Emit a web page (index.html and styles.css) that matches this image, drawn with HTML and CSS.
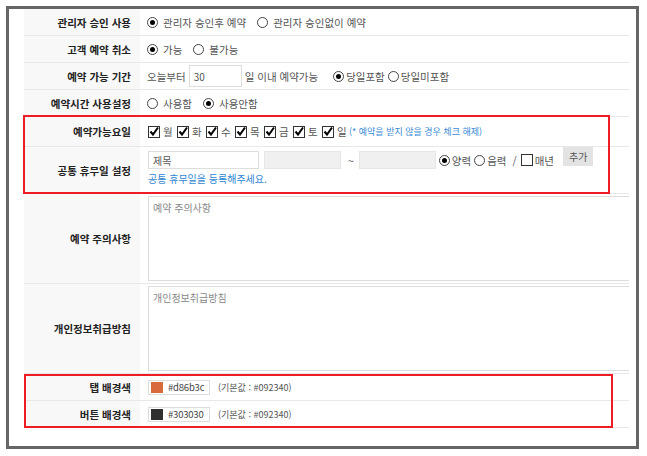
FILE: index.html
```html
<!DOCTYPE html>
<html lang="ko">

<head>
  <meta charset="UTF-8" />
  <title>예약 설정</title>
  <link rel="stylesheet" href="styles.css">
</head>

<body>
  <div class="frame">
    <div class="sheet">
      <div class="row">
        <div class="label">관리자 승인 사용</div>
        <div class="value">
          <span class="opt"><span class="radio on"></span>관리자 승인후 예약</span>
          <span class="opt"><span class="radio"></span>관리자 승인없이 예약</span>
        </div>
      </div>

      <div class="row">
        <div class="label">고객 예약 취소</div>
        <div class="value">
          <span class="opt"><span class="radio on"></span>가능</span>
          <span class="opt"><span class="radio"></span>불가능</span>
        </div>
      </div>

      <div class="row">
        <div class="label">예약 가능 기간</div>
        <div class="value">
          오늘부터
          <input class="field field-days" type="text" value="30">
          일 이내 예약가능
          <span class="opt opt-tight opt-first"><span class="radio on"></span>당일포함</span>
          <span class="opt opt-tight"><span class="radio"></span>당일미포함</span>
        </div>
      </div>

      <div class="row">
        <div class="label">예약시간 사용설정</div>
        <div class="value">
          <span class="opt"><span class="radio"></span>사용함</span>
          <span class="opt"><span class="radio on"></span>사용안함</span>
        </div>
      </div>

      <div class="row row-days">
        <div class="label">예약가능요일</div>
        <div class="value">
          <span class="day"><svg class="chk" viewBox="0 0 12 12"><rect x="0.5" y="0.5" width="11" height="11" /><path d="M2.5 5.5 L5 8.5 L10 1.5" /></svg>월</span>
          <span class="day"><svg class="chk" viewBox="0 0 12 12"><rect x="0.5" y="0.5" width="11" height="11" /><path d="M2.5 5.5 L5 8.5 L10 1.5" /></svg>화</span>
          <span class="day"><svg class="chk" viewBox="0 0 12 12"><rect x="0.5" y="0.5" width="11" height="11" /><path d="M2.5 5.5 L5 8.5 L10 1.5" /></svg>수</span>
          <span class="day"><svg class="chk" viewBox="0 0 12 12"><rect x="0.5" y="0.5" width="11" height="11" /><path d="M2.5 5.5 L5 8.5 L10 1.5" /></svg>목</span>
          <span class="day"><svg class="chk" viewBox="0 0 12 12"><rect x="0.5" y="0.5" width="11" height="11" /><path d="M2.5 5.5 L5 8.5 L10 1.5" /></svg>금</span>
          <span class="day"><svg class="chk" viewBox="0 0 12 12"><rect x="0.5" y="0.5" width="11" height="11" /><path d="M2.5 5.5 L5 8.5 L10 1.5" /></svg>토</span>
          <span class="day"><svg class="chk" viewBox="0 0 12 12"><rect x="0.5" y="0.5" width="11" height="11" /><path d="M2.5 5.5 L5 8.5 L10 1.5" /></svg>일</span>
          <span class="note">(* 예약을 받지 않을 경우 체크 해제)</span>
        </div>
      </div>

      <div class="row row-holiday">
        <div class="label">공통 휴무일 설정</div>
        <div class="value value-stack">
          <div class="holiday-line">
            <input class="field field-title" type="text" value="제목">
            <input class="field field-date" type="text" disabled>
            <span class="tilde">~</span>
            <input class="field field-date field-end" type="text" disabled>
            <span class="opt opt-tight opt-solar"><span class="radio on"></span>양력</span>
            <span class="opt opt-tight"><span class="radio"></span>음력</span>
            <span class="slash">/</span>
            <span class="opt opt-tight"><svg class="chk" viewBox="0 0 12 12"><rect x="0.5" y="0.5" width="11" height="11" /></svg>매년</span>
            <button class="btn" type="button">추가</button>
          </div>
          <a class="link" href="#">공통 휴무일을 등록해주세요.</a>
        </div>
      </div>

      <div class="row row-text">
        <div class="label">예약 주의사항</div>
        <div class="value value-text">
          <textarea class="memo" placeholder="예약 주의사항"></textarea>
        </div>
      </div>

      <div class="row row-text">
        <div class="label">개인정보취급방침</div>
        <div class="value value-text">
          <textarea class="memo" placeholder="개인정보취급방침"></textarea>
        </div>
      </div>

      <div class="row">
        <div class="label">탭 배경색</div>
        <div class="value">
          <span class="color-field"><span class="swatch" style="background: #d86b3c;"></span>#d86b3c</span>
          <span class="hint">(기본값 : #092340)</span>
        </div>
      </div>

      <div class="row">
        <div class="label">버튼 배경색</div>
        <div class="value">
          <span class="color-field"><span class="swatch" style="background: #303030;"></span>#303030</span>
          <span class="hint">(기본값 : #092340)</span>
        </div>
      </div>
    </div>

    <!-- red marks drawn over the form -->
    <div class="mark mark-days"></div>
    <div class="mark mark-colors"></div>
  </div>
</body>

</html>
```

FILE: styles.css
```css
* {
  box-sizing: border-box;
}

body {
  margin: 0;
  padding: 6px;
  background: #fff;
  font-family: "Noto Sans CJK KR", "Noto Sans", sans-serif;
  font-size: 10px;
  color: #555;
}

.frame {
  position: relative;
  width: 633px;
  height: 443px;
  border: 3px solid #666;
  background: #fff;
}

.sheet {
  margin: 0 7px 0 15px;
  overflow: hidden;
}

.row {
  display: flex;
  height: 27px;
  border-bottom: 1px solid #e8e8e8;
}

.row-days {
  height: 30px;
}

.row-holiday {
  height: 47px;
}

.row-text {
  height: 90px;
}

.label {
  flex: none;
  width: 116px;
  display: flex;
  align-items: center;
  justify-content: flex-end;
  padding-right: 9px;
  background: #f8f8f8;
  font-size: 10.5px;
  font-weight: bold;
  color: #222;
}

.value {
  flex: 1;
  min-width: 0;
  display: flex;
  align-items: center;
  padding-left: 7px;
  font-size: 10.5px;
  white-space: nowrap;
}

/* radio buttons */
.opt {
  display: inline-flex;
  align-items: center;
  gap: 5px;
  margin-right: 11px;
}

.opt-tight {
  gap: 2px;
  margin-right: 3px;
}

.opt-first {
  margin-left: 15px;
}

.opt-solar {
  margin-left: 3px;
}

.radio {
  flex: none;
  width: 11px;
  height: 11px;
  border: 1px solid #444;
  border-radius: 50%;
  background: #fff;
  display: inline-flex;
  align-items: center;
  justify-content: center;
}

.radio.on::after {
  content: "";
  width: 5px;
  height: 5px;
  border-radius: 50%;
  background: #000;
}

/* checkboxes */
.chk {
  flex: none;
  width: 12px;
  height: 12px;
}

.chk rect {
  fill: #fff;
  stroke: #333;
  stroke-width: 1;
}

.chk path {
  fill: none;
  stroke: #000;
  stroke-width: 2;
}

.day {
  display: inline-flex;
  align-items: center;
  gap: 3px;
  width: 29px;
  padding-left: 1px;
}

.note {
  margin-left: -1px;
  font-size: 9px;
  color: #3a8ad6;
}

/* text fields */
.field {
  height: 18px;
  border: 1px solid #ddd;
  background: #fff;
  font-family: inherit;
  font-size: 10px;
  color: #555;
  padding: 0 4px;
  outline: none;
}

.field-days {
  width: 53px;
  height: 22px;
  margin: 0 3px;
}

.field-title {
  width: 111px;
  margin-left: 1px;
}

.field-date {
  width: 77px;
  margin-left: 5px;
  background: #f0f0f0;
  border-color: #e6e6e6;
}

.field-end {
  margin-left: 0;
}

.tilde {
  margin: 0 5px 0 7px;
}

.slash {
  margin: 0 4px 0 3px;
}

.value-stack {
  flex-direction: column;
  align-items: flex-start;
}

.holiday-line {
  display: flex;
  align-items: center;
  height: 26px;
}

.btn {
  align-self: flex-start;
  height: 19px;
  margin-left: 6px;
  padding: 0 6px;
  border: none;
  background: #e3e3e3;
  font-family: inherit;
  font-size: 10px;
  color: #555;
}

.link {
  margin: -2px 0 0 1px;
  font-size: 10px;
  color: #2f86d4;
  text-decoration: none;
}

/* text areas */
.value-text {
  align-items: flex-start;
  padding: 2px 0 0 8px;
}

.memo {
  flex: none;
  width: calc(100% + 20px);
  height: 85px;
  border: 1px solid #ddd;
  padding: 3px 4px;
  resize: none;
  font-family: inherit;
  font-size: 10px;
  color: #555;
}

.memo::placeholder {
  color: #888;
}

/* colour pickers */
.color-field {
  display: inline-flex;
  align-items: center;
  gap: 5px;
  width: 62px;
  height: 15px;
  margin-left: 1px;
  padding-left: 2px;
  border: 1px solid #ddd;
  font-size: 9.5px;
  letter-spacing: -0.2px;
  color: #444;
}

.swatch {
  flex: none;
  width: 12px;
  height: 11px;
}

.hint {
  margin-left: 8px;
  font-size: 9px;
  color: #555;
}

/* annotation boxes */
.mark {
  position: absolute;
  border: 2px solid #ee1c24;
}

.mark-days {
  left: 14px;
  top: 106px;
  width: 587px;
  height: 79px;
}

.mark-colors {
  left: 15px;
  top: 365px;
  width: 589px;
  height: 54px;
}
```
